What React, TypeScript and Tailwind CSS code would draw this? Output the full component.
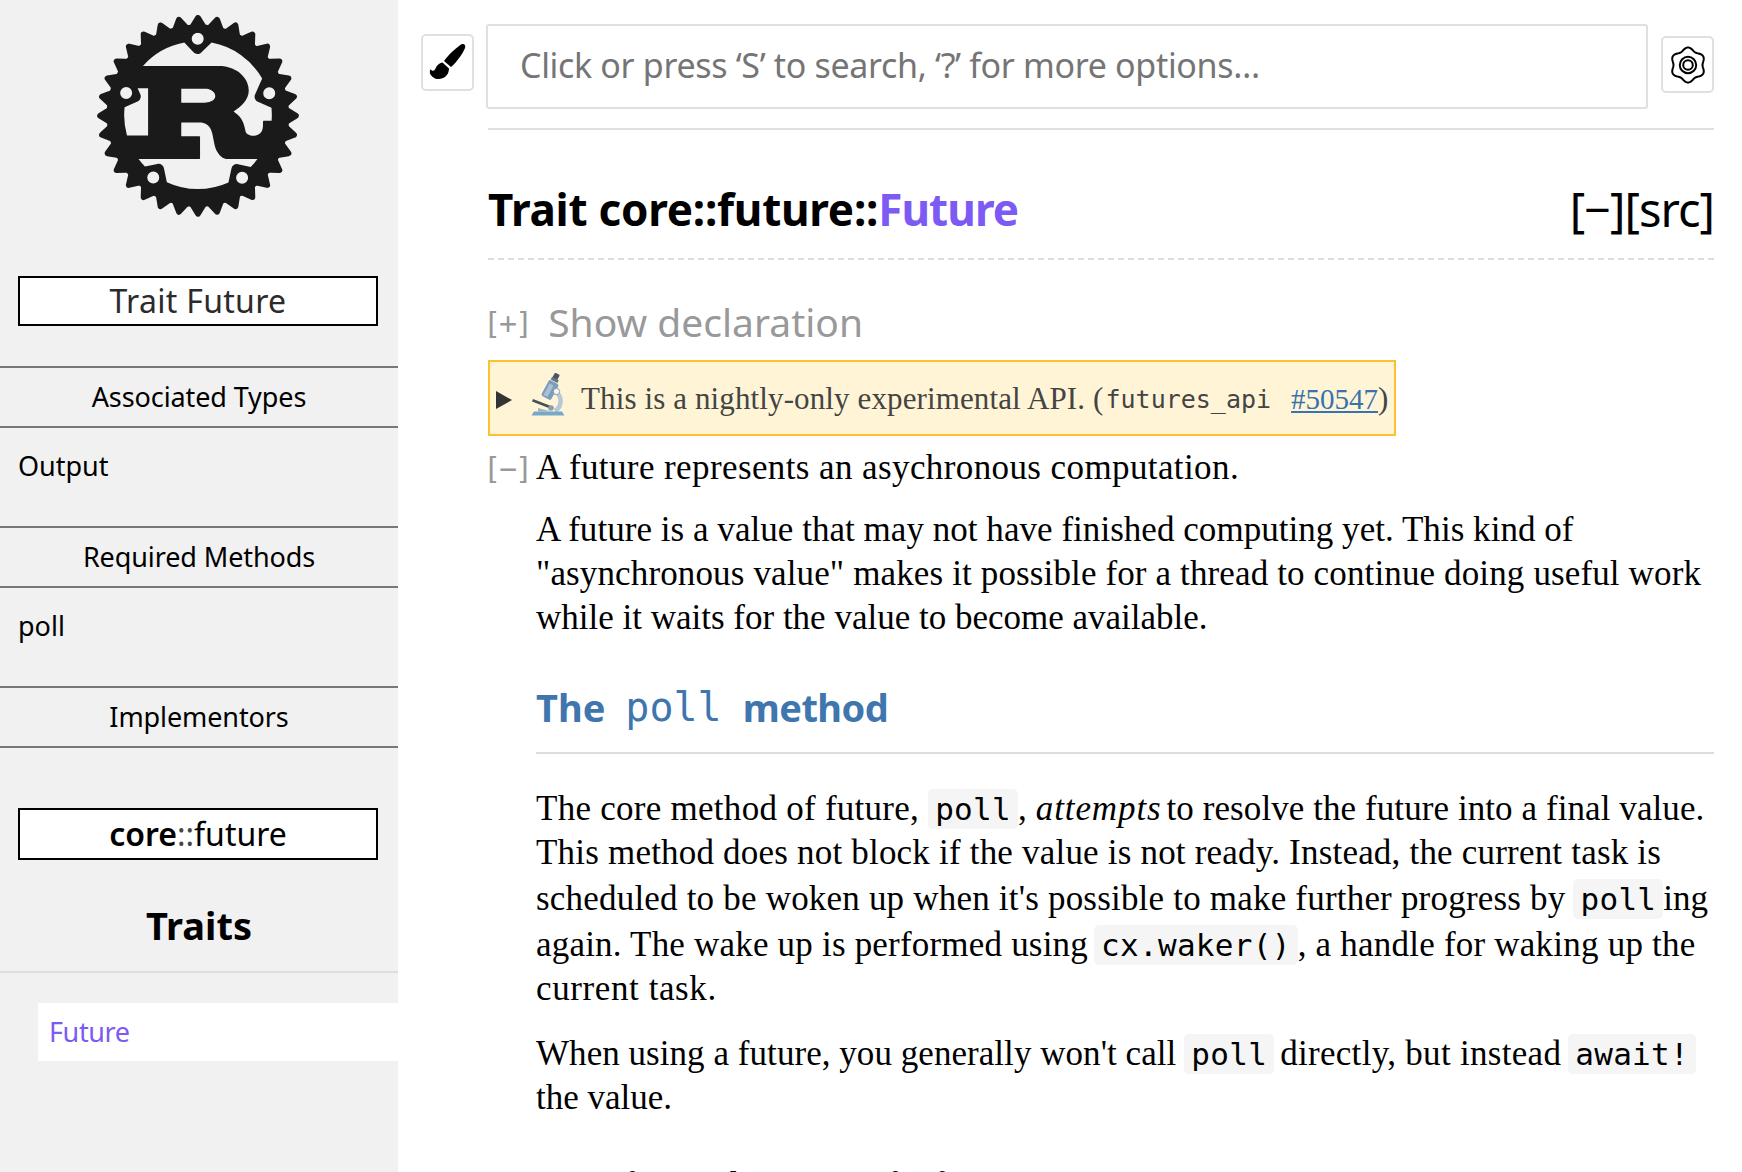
import React from "react";

function RustLogo() {
  return (
    <svg viewBox="18.7 18.7 104.7 104.7" className="mr-[2px] h-[202px] w-[202px]" fill="#1a1a1a">
      <path d="m71.05 23.68c-26.06 0-47.27 21.22-47.27 47.27s21.22 47.27 47.27 47.27 47.27-21.22 47.27-47.27-21.22-47.27-47.27-47.27zm-.07 4.2a3.11 3.11 0 0 1 3.02 3.11 3.11 3.11 0 0 1-6.22 0 3.11 3.11 0 0 1 3.2-3.11zm7.12 5.12a38.27 38.27 0 0 1 26.2 18.66l-3.67 8.28c-.63 1.43.02 3.11 1.44 3.75l7.06 3.13a38.27 38.27 0 0 1 .08 6.64h-3.93c-.39 0-.55.26-.55.64v1.8c0 4.24-2.39 5.17-4.49 5.4-2 .23-4.21-.84-4.49-2.06-1.18-6.63-3.14-8.04-6.24-10.49 3.85-2.44 7.85-6.05 7.85-10.87 0-5.21-3.57-8.49-6-10.1-3.42-2.25-7.2-2.7-8.22-2.7h-40.6a38.27 38.27 0 0 1 21.41-12.08l4.79 5.02c1.08 1.13 2.87 1.18 4 .09zm-44.2 23.02a3.11 3.11 0 0 1 3.02 3.11 3.11 3.11 0 0 1-6.22 0 3.11 3.11 0 0 1 3.2-3.11zm74.15.14a3.11 3.11 0 0 1 3.02 3.11 3.11 3.11 0 0 1-6.22 0 3.11 3.11 0 0 1 3.2-3.11zm-68.29.5h5.42v24.44h-10.94a38.27 38.27 0 0 1-1.24-14.61l6.7-2.98c1.43-.64 2.08-2.31 1.44-3.74zm22.62.26h12.91c.67 0 4.71.77 4.71 3.8 0 2.51-3.1 3.41-5.65 3.41h-11.98zm0 17.56h9.89c.9 0 4.83.26 6.08 5.28.39 1.54 1.26 6.56 1.85 8.17.59 1.8 2.98 5.4 5.53 5.4h16.14a38.27 38.27 0 0 1-3.54 4.1l-6.57-1.41c-1.53-.33-3.04.65-3.37 2.18l-1.56 7.28a38.27 38.27 0 0 1-31.91-.15l-1.56-7.28c-.33-1.53-1.83-2.51-3.36-2.18l-6.43 1.38a38.27 38.27 0 0 1-3.32-3.92h31.27c.35 0 .59-.06.59-.39v-11.06c0-.32-.24-.39-.59-.39h-9.15zm-14.43 25.33a3.11 3.11 0 0 1 3.02 3.11 3.11 3.11 0 0 1-6.22 0 3.11 3.11 0 0 1 3.2-3.11zm46.05.14a3.11 3.11 0 0 1 3.02 3.11 3.11 3.11 0 0 1-6.22 0 3.11 3.11 0 0 1 3.2-3.11z" />
      <path
        d="m115.68 70.95a44.63 44.63 0 0 1-44.63 44.63 44.63 44.63 0 0 1-44.63-44.63 44.63 44.63 0 0 1 44.63-44.63 44.63 44.63 0 0 1 44.63 44.63zm-.84-4.31 6.96 4.31-6.96 4.31 5.98 5.59-7.66 2.87 4.78 6.65-8.09 1.32 3.4 7.46-8.19-.29 1.88 7.98-7.98-1.88.29 8.19-7.46-3.4-1.32 8.09-6.65-4.78-2.87 7.66-5.59-5.98-4.31 6.96-4.31-6.96-5.59 5.98-2.87-7.66-6.65 4.78-1.32-8.09-7.46 3.4.29-8.19-7.98 1.88 1.88-7.98-8.19.29 3.4-7.46-8.09-1.32 4.78-6.65-7.66-2.87 5.98-5.59-6.96-4.31 6.96-4.31-5.98-5.59 7.66-2.87-4.78-6.65 8.09-1.32-3.4-7.46 8.19.29-1.88-7.98 7.98 1.88-.29-8.19 7.46 3.4 1.32-8.09 6.65 4.78 2.87-7.66 5.59 5.98 4.31-6.96 4.31 6.96 5.59-5.98 2.87 7.66 6.65-4.78 1.32 8.09 7.46-3.4-.29 8.19 7.98-1.88-1.88 7.98 8.19-.29-3.4 7.46 8.09 1.32-4.78 6.65 7.66 2.87z"
        fillRule="evenodd"
        stroke="#1a1a1a"
        strokeLinecap="round"
        strokeLinejoin="round"
        strokeWidth="3"
      />
    </svg>
  );
}

function BrushIcon() {
  return (
    <svg viewBox="0 0 40 40" className="h-[40px] w-[40px]" fill="#000">
      <path d="M33 1.500C36 0 38 2 37 5C35 10 29 19 23 24L16 18C20 12 28 5 33 1.500Z" />
      <path d="M14.500 19.500L21 25.500C21 32 16 36 10.500 36C7 36 3.500 34 2 30.500C1.500 29 2 27 2.500 26C3.500 28 5.500 28.500 7 26.500C8.500 22.500 11 20 14.500 19.500Z" />
    </svg>
  );
}

function gearPath() {
  const pts: string[] = [];
  for (let i = 0; i < 120; i++) {
    const t = (i / 120) * Math.PI * 2;
    const r = 16 + 1.5 * Math.cos(6 * t);
    const x = 20 + r * Math.sin(t);
    const y = 20 - r * Math.cos(t);
    pts.push(`${i === 0 ? "M" : "L"}${x.toFixed(2)} ${y.toFixed(2)}`);
  }
  return pts.join("") + "Z";
}

function GearIcon() {
  return (
    <svg viewBox="0 0 40 40" className="h-[40px] w-[40px]" fill="none" stroke="#000" strokeWidth="2">
      <path d={gearPath()} strokeLinejoin="round" />
      <circle cx="20" cy="20" r="8.200" />
      <circle cx="20" cy="20" r="4.800" />
    </svg>
  );
}

function Microscope() {
  return (
    <svg viewBox="0 0 34 43" className="h-[43px] w-[34px] shrink-0">
      <path d="M24 19C31 22 32 33 24 38" fill="none" stroke="#b5c8d6" strokeWidth="4.500" />
      <rect x="13.500" y="8" width="11" height="18" rx="2" transform="rotate(28 19 17)" fill="#7d9cba" />
      <rect x="15.500" y="11" width="4.500" height="13" transform="rotate(28 18 17)" fill="#a9bfd3" />
      <rect x="22" y="0.500" width="5.500" height="7.500" rx="1" transform="rotate(28 25 4)" fill="#4d5560" />
      <rect x="20" y="5.500" width="7.500" height="3" transform="rotate(28 24 7)" fill="#5e7489" />
      <circle cx="25.500" cy="18.500" r="3.200" fill="#f4f4f4" stroke="#7c8a96" strokeWidth="0.800" />
      <path d="M2 26L20 33L19 35.500L1 28.500Z" fill="#46515c" />
      <circle cx="20" cy="35" r="2.800" fill="#8aa0b2" />
      <path d="M3 38.500H31L33.500 42.500H0.500Z" fill="#78a8c8" />
      <path d="M7 35L20 38.500H7Z" fill="#9cb4c6" />
    </svg>
  );
}

function Triangle() {
  return (
    <svg viewBox="0 0 16 18" className="h-[18px] w-[16px] shrink-0">
      <polygon points="0,0 16,9 0,18" fill="#333" />
    </svg>
  );
}

function SideHeader({ children }: { children: React.ReactNode }) {
  return (
    <div className="flex h-[62px] items-center justify-center border-y-2 border-[#777] text-[27px] tracking-[-0.1px] text-black">
      {children}
    </div>
  );
}

function SideItem({ children }: { children: React.ReactNode }) {
  return <div className="flex h-[98px] items-start pt-[17px] pl-[18px] text-[27px] leading-[42px] text-black">{children}</div>;
}

function Chip({ children, className = "" }: { children: React.ReactNode; className?: string }) {
  return (
    <code className={`flex h-[40px] shrink-0 items-center rounded-[5px] bg-[#f5f5f5] px-[7px] font-['DejaVu_Sans_Mono',monospace] text-[31px] tracking-[0.3px] ${className}`}>
      {children}
    </code>
  );
}

function Toggle({ children, className = "" }: { children: React.ReactNode; className?: string }) {
  return <span className={`-ml-[5px] font-['DejaVu_Sans_Mono',monospace] text-[30px] leading-none tracking-[-2px] text-[#999] ${className}`}>{children}</span>;
}

const line = "flex h-[44px] items-center whitespace-pre";

export default function App() {
  return (
    <div className="flex h-[1172px] w-[1742px] overflow-hidden bg-white font-['Noto_Sans',sans-serif]">
      <aside className="flex h-full w-[398px] shrink-0 flex-col bg-[#f1f1f1]">
        <div className="mt-[15px] flex justify-center">
          <RustLogo />
        </div>
        <div className="mt-[59px] mr-[20px] ml-[18px] flex h-[50px] items-center justify-center border-2 border-black bg-white text-[32px] tracking-[0.300px] text-[#2b2b2b]">
          Trait Future
        </div>
        <div className="mt-[40px]">
          <SideHeader>Associated Types</SideHeader>
          <SideItem>Output</SideItem>
          <SideHeader>Required Methods</SideHeader>
          <SideItem>poll</SideItem>
          <SideHeader>Implementors</SideHeader>
        </div>
        <div className="mt-[60px] mr-[20px] ml-[18px] flex h-[52px] items-center justify-center border-2 border-black bg-white text-[32px] text-black">
          <span className="font-semibold">core</span>
          <span className="text-[#444]">::</span>
          <span>future</span>
        </div>
        <div className="flex h-[113px] items-center justify-center border-b-2 border-[#ddd] pt-[20px] text-[38px] font-bold text-black">
          Traits
        </div>
        <div className="mt-[30px] ml-[38px] flex h-[58px] items-center bg-white pl-[11px] text-[27px] tracking-[-0.400px] text-[#7c5af3]">
          Future
        </div>
      </aside>

      <main className="min-w-0 flex-1 pr-[28px] pl-[23px]">
        <div className="flex items-start pt-[24px]">
          <button className="mt-[10px] flex h-[57px] w-[53px] shrink-0 items-center justify-center rounded-[5px] border-2 border-[#e0e0e0]">
            <BrushIcon />
          </button>
          <input
            readOnly
            placeholder="Click or press ‘S’ to search, ‘?’ for more options…"
            className="mr-[13px] ml-[12px] h-[85px] min-w-0 flex-1 rounded-[3px] border-2 border-[#e0e0e0] pb-[4px] pl-[32px] text-[34px] tracking-[-0.330px] outline-none placeholder:text-[#757575]"
          />
          <button className="mt-[12px] flex h-[57px] w-[53px] shrink-0 items-center justify-center rounded-[5px] border-2 border-[#e0e0e0]">
            <GearIcon />
          </button>
        </div>

        <div className="ml-[67px]">
          <div className="mt-[19px] flex h-[132px] items-center justify-between border-y-2 border-t-[#e0e0e0] border-b-[#ddd] pt-[30px] [border-bottom-style:dashed]">
            <h1 className="text-[44px] font-bold text-black">
              <span className="tracking-[-0.250px]">Trait core::future::</span>
              <span className="tracking-[-0.900px] text-[#7c5af3]">Future</span>
            </h1>
            <span className="text-[47px] tracking-[-1px] text-black">[−][src]</span>
          </div>

          <div className="flex h-[100px] items-center pt-[24px]">
            <Toggle className="mt-[4px]">[+]</Toggle>
            <span className="ml-[17px] text-[39px] text-[#999]">Show declaration</span>
          </div>

          <div className="flex h-[76px] w-[908px] items-center border-2 border-[#ffc12f] bg-[#fff5d6] pt-[3px] pl-[6px] whitespace-pre text-[#444]">
            <Triangle />
            <span className="-mt-[10px] ml-[19px]">
              <Microscope />
            </span>
            <span className="ml-[16px] font-['Liberation_Serif',serif] text-[31px] tracking-[0.120px]">This is a nightly-only experimental API. (</span>
            <code className="ml-[2px] font-['DejaVu_Sans_Mono',monospace] text-[25px]">futures_api</code>
            <a href="#" className="ml-[20px] font-['Liberation_Serif',serif] text-[29px] text-[#3873ad] underline">
              #50547
            </a>
            <span className="font-['Liberation_Serif',serif] text-[31px]">)</span>
          </div>

          <div className="font-['Liberation_Serif',serif] text-[35px] text-black">
            <div className={`${line} mt-[10px]`}>
              <span className="w-[48px]">
                <Toggle>[−]</Toggle>
              </span>
              <span className="tracking-[0.400px]">A future represents an asychronous computation.</span>
            </div>

            <div className="mt-[18px] ml-[48px]">
              <div className={`${line} tracking-[0.040px]`}>A future is a value that may not have finished computing yet. This kind of</div>
              <div className={`${line} tracking-[0.135px]`}>"asynchronous value" makes it possible for a thread to continue doing useful work</div>
              <div className={line}>while it waits for the value to become available.</div>

              <h2 className="mt-[45px] flex h-[69px] items-start border-b-2 border-[#ddd] font-['Noto_Sans',sans-serif] text-[38px] leading-[44px] font-bold whitespace-pre text-[#3f76ad]">
                <span>The</span>
                <code className="ml-[20px] font-['DejaVu_Sans_Mono',monospace] text-[40px] font-normal">poll</code>
                <span className="ml-[21px] tracking-[-0.500px]">method</span>
              </h2>

              <div className={`${line} mt-[33px]`}>
                <span className="tracking-[0.270px]">The core method of future,</span>
                <Chip className="ml-[9px]">poll</Chip>
                <span>,</span>
                <em className="ml-[9px] tracking-[0.900px]">attempts</em>
                <span className="ml-[5px] tracking-[0.080px]">to resolve the future into a final value.</span>
              </div>
              <div className={`${line} tracking-[0.200px]`}>This method does not block if the value is not ready. Instead, the current task is</div>
              <div className={`${line} mt-[2px]`}>
                <span className="tracking-[0.200px]">scheduled to be woken up when it's possible to make further progress by</span>
                <Chip className="ml-[8px]">poll</Chip>
                <span>ing</span>
              </div>
              <div className={`${line} mt-[2px]`}>
                <span className="tracking-[0.200px]">again. The wake up is performed using</span>
                <Chip className="ml-[6px]">cx.waker()</Chip>
                <span className="tracking-[0.220px]">, a handle for waking up the</span>
              </div>
              <div className={`${line} tracking-[0.600px]`}>current task.</div>

              <div className={`${line} mt-[21px]`}>
                <span className="tracking-[0.050px]">When using a future, you generally won't call</span>
                <Chip className="ml-[8px]">poll</Chip>
                <span className="ml-[6px] tracking-[0.300px]">directly, but instead</span>
                <Chip className="ml-[7px]">await!</Chip>
              </div>
              <div className={line}>the value.</div>

              <h2 className="mt-[43px] font-['Noto_Sans',sans-serif] text-[38px] leading-[44px] font-bold text-black">Runtime characteristics</h2>
            </div>
          </div>
        </div>
      </main>
    </div>
  );
}
